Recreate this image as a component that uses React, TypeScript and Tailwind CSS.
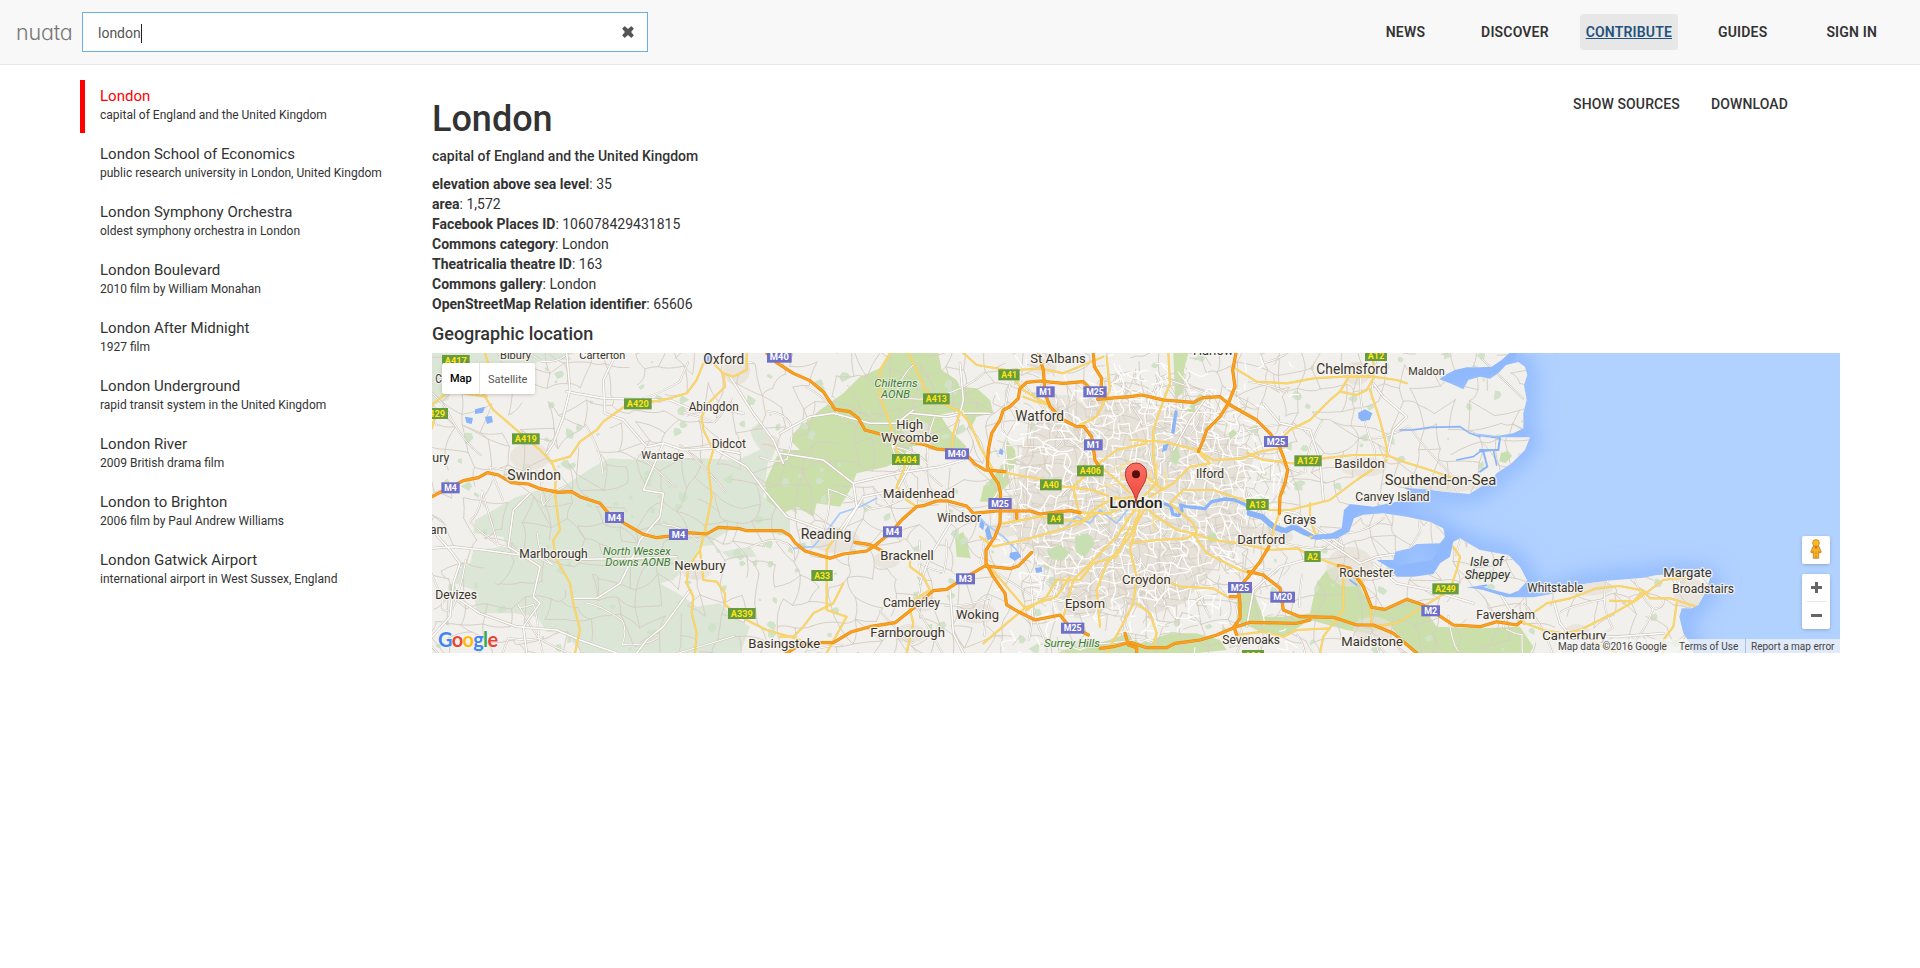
import React from "react";

const NAV = [
  { label: "NEWS", left: "ml-0" },
  { label: "DISCOVER", left: "ml-[44px]" },
  { label: "CONTRIBUTE", left: "ml-[25px]", active: true },
  { label: "GUIDES", left: "ml-[34px]" },
  { label: "SIGN IN", left: "ml-[47px]" },
];

const RESULTS = [
  ["London", "capital of England and the United Kingdom"],
  ["London School of Economics", "public research university in London, United Kingdom"],
  ["London Symphony Orchestra", "oldest symphony orchestra in London"],
  ["London Boulevard", "2010 film by William Monahan"],
  ["London After Midnight", "1927 film"],
  ["London Underground", "rapid transit system in the United Kingdom"],
  ["London River", "2009 British drama film"],
  ["London to Brighton", "2006 film by Paul Andrew Williams"],
  ["London Gatwick Airport", "international airport in West Sussex, England"],
];

const FACTS = [
  ["elevation above sea level", "35"],
  ["area", "1,572"],
  ["Facebook Places ID", "106078429431815"],
  ["Commons category", "London"],
  ["Theatricalia theatre ID", "163"],
  ["Commons gallery", "London"],
  ["OpenStreetMap Relation identifier", "65606"],
];

/* ---------- map geometry, three units to the pixel ---------- */

const LAND =
  "M6 9H3238L3215 30 3185 50 3150 52 3110 52 3075 60 3045 75 3028 88 3060 100 3100 118 3115 90 3150 80 3180 86 3205 70 3228 45 3265 36 3285 50 3292 75 3282 105 3290 150 3280 190 3280 235 3250 250 3200 258 3150 252 3110 246 3150 256 3200 262 3300 262 3285 300 3245 340 3200 370 3180 395 3150 412 3118 432 3040 425 2990 418 2920 413 2945 425 2900 455 2830 470 2760 462 2742 480 2735 535 2705 550 2650 556 2640 568 2720 566 2758 545 2772 505 2800 494 2860 490 2930 500 3000 515 3040 535 3045 560 3030 580 2960 582 2940 595 2895 605 2890 630 2840 630 2880 655 2900 680 2950 680 3010 672 3030 640 3060 620 3070 575 3090 565 3150 600 3235 615 3270 650 3292 692 3265 722 3240 732 3200 722 3150 708 3110 712 3160 720 3230 742 3310 742 3360 733 3440 705 3530 692 3640 683 3680 675 3760 672 3840 685 3830 720 3805 765 3785 775 3755 775 3748 800 3760 850 3780 880 3790 909H6Z";

const GREEN_PALE = [
  "M6 9H410L425 30 330 30 300 55 235 60 220 95 200 80 120 40 70 100 55 150 6 165Z",
  "M430 390L490 350 540 325 640 330 820 325 920 330 990 300 1015 330 1000 440 1060 480 1080 500V560L1010 545 900 540 850 570 860 610 900 600 960 590 980 620 900 625 850 585 810 590 780 640 730 690 690 700 760 740 800 770 870 760 910 800 960 830 930 909H460L400 850 350 845 320 800 250 790 140 790 130 720 75 700 80 660 120 640 130 600 230 590 220 560 130 550 135 510 200 475 260 440 330 420 370 430Z",
  "M960 240L990 215 1010 250 1040 290 1020 340 970 270Z",
];

const GREEN = [
  "M1380 9H1525L1535 60 1580 90 1590 110 1640 115 1680 150 1690 190 1640 200 1620 240 1600 180 1500 200 1450 250 1480 285 1440 290 1420 320 1370 350 1280 370 1260 420 1230 470 1160 460 1150 500 1100 470 1060 490 1010 450 1005 400 1040 320 1060 300 1110 300 1080 270 1090 250 1170 180 1240 130 1290 80 1350 55Z",
  "M1730 270L1755 300 1760 345 1730 370 1740 395 1720 420 1710 455 1650 455 1660 410 1690 380 1730 330Z",
  "M1470 200L1530 195 1560 240 1610 290 1580 310 1510 290 1460 240Z",
  "M2420 740L2460 700 2500 800 2560 800 2640 790 2660 700 2690 660 2740 640 2780 680 2800 730 2830 780 2870 775 2930 745 2980 770 3020 830 3150 835 3270 830 3310 890 3300 909H2960L2880 830 2810 850 2750 840 2640 810 2560 860 2500 850 2460 830 2420 830Z",
  "M1940 889L2000 880 2040 870 2090 850 2130 880 2220 850 2300 850 2370 870 2390 900 2300 909H1880Z",
  "M1940 555L1985 550 2000 590 1960 625 1935 600Z",
  "M1575 560L1600 545 1612 580 1622 625 1580 620Z",
  "M2230 9L2275 9 2262 60 2258 130 2235 145Z",
  "M2270 180L2310 130 2325 140 2290 210Z",
];

const TOWNS: number[][] = [
  [300, 320, 60, 40],
  [920, 60, 40, 45],
  [1460, 240, 45, 28],
  [1215, 570, 75, 38],
  [1370, 630, 40, 25],
  [1480, 760, 45, 24],
  [1500, 440, 50, 22],
  [1840, 50, 40, 25],
  [1900, 180, 60, 45],
  [1640, 790, 60, 30],
  [1950, 760, 70, 45],
  [2780, 70, 40, 35],
  [2800, 350, 70, 30],
  [3060, 400, 110, 25],
  [2760, 650, 70, 60],
  [2830, 840, 60, 40],
  [2500, 560, 90, 30],
  [3470, 715, 80, 22],
  [3780, 730, 50, 45],
  [3440, 850, 40, 28],
  [800, 660, 45, 30],
  [1720, 540, 55, 20],
  [1440, 850, 50, 28],
  [1020, 280, 30, 25],
];

const MOTORWAYS = [
  "M6 440L60 412 100 392 145 383 172 368 205 375 245 398 295 402 330 416 385 427 425 425 450 440 510 460 540 495 600 530 640 553 680 563 720 558 770 548 830 552 865 532 930 536 950 542 1055 542 1080 557 1095 578 1125 603 1200 625 1240 612 1310 603 1330 590 1380 550 1415 510 1460 470 1480 467 1520 453 1550 452 1610 468 1630 490 1700 483 1800 483 1830 492 1880 486 1920 482 1950 488",
  "M1275 577L1320 584 1355 602",
  "M1760 483V505",
  "M1010 9L1040 38 1090 70 1140 92 1180 125 1215 178 1260 185 1285 205 1305 240 1350 252 1400 265 1480 283 1520 297 1600 303 1635 342 1665 360 1725 365",
  "M2548 490L2550 440 2565 400 2573 360 2560 320 2548 290 2520 250 2480 210 2400 165 2370 140 2320 143 2290 157 2200 150 2170 143 2135 135 2100 140 2060 143 2003 148 2012 130 1980 115 1960 95 1900 100 1830 93 1790 97 1770 115 1765 145 1740 170 1720 180 1710 210 1685 250 1675 300 1672 350 1690 380 1705 400 1712 430 1710 520 1695 560 1668 600 1668 640 1690 680 1725 730 1730 765 1765 785 1815 810 1890 795 1910 820 1975 855",
  "M2010 895L2050 890 2100 877 2150 893 2210 893 2235 880 2310 870 2360 855 2415 832 2460 817 2600 820 2640 810",
  "M2517 590L2490 635 2455 680 2425 715 2430 760 2430 805 2412 830 2420 855",
  "M2400 740H2428",
  "M1825 9L1840 60 1845 130 1860 170 1900 210 1940 230 1962 230 1985 260 1995 330 2005 345",
  "M1990 9L1993 50 2015 85 2012 130",
  "M2418 9L2408 60 2415 110 2395 160 2370 200 2330 240 2320 270 2305 305",
  "M1070 909L1110 885 1160 878 1210 878 1265 845 1320 830 1395 818 1450 775 1510 722 1550 718 1610 680 1665 648 1740 656 1765 648 1805 607",
  "M2455 665L2500 675 2550 715 2560 780 2610 800 2710 802 2780 825 2830 825 2890 850 2960 909",
  "M2725 647L2760 655 2800 710 2825 772 2865 778 2930 748 2980 765 3040 805 3070 825 3150 830 3200 815 3260 825 3272 815",
  "M2085 850L2095 885 2120 893 2120 909",
];

const A_ROADS = [
  "M140 100L190 180 260 240 330 300 365 335 378 370 375 430 385 510 390 540 370 570 375 620 420 700 430 760 450 840 435 909",
  "M365 335L420 320 450 275 500 240 520 215 590 165 640 160 720 145 770 130 800 90 820 40 850 40 880 70 910 80 950 60 950 9",
  "M6 165L60 120 100 130 170 140",
  "M20 180L6 235",
  "M880 70L885 110 835 160 815 200 820 240 850 300 835 350 845 440 830 520 810 600 775 650 770 700 790 740 785 790 800 850 795 909",
  "M810 600L820 690 860 695 885 730 885 765 950 810 1010 840 1080 860 1110 870",
  "M165 9L180 60 160 130",
  "M1380 9L1350 60 1350 140 1380 220 1400 300 1425 350 1400 410 1430 450 1460 470",
  "M1435 9L1460 60 1485 120 1540 160 1590 185 1620 220 1650 290 1690 360 1760 375 1830 387 1900 410 1990 420 2040 440 2100 450",
  "M1590 185L1570 250 1565 300",
  "M1600 9L1640 45 1730 60 1780 120 1830 150 1860 165",
  "M1765 60L1830 55 1900 70 2020 20",
  "M1190 909L1250 800 1190 780 1190 680 1190 600 1230 540",
  "M1050 860L1090 860 1120 830 1150 790 1210 760 1240 700",
  "M1430 909L1450 820 1435 760 1500 720 1480 680 1440 650 1440 610",
  "M1650 560L1690 590 1780 570 1870 545 1950 520 1990 480 2040 450 2120 440",
  "M1720 520L1830 500 1900 510 1960 515 2000 490",
  "M1670 640L1790 780 1850 740 1880 690 1950 690 1990 640 2060 620 2100 530",
  "M1660 880L1730 820 1790 770 1880 740 1920 680",
  "M2010 830L2000 720 2030 640 2100 560 2130 480",
  "M2100 580L2180 570 2270 565 2300 545 2290 520 2220 460 2260 420 2350 420 2440 450 2520 480 2580 480 2700 450 2780 390 2870 330",
  "M2150 465L2120 520 2100 600 2120 680 2110 760 2080 820 2030 909",
  "M2290 550L2350 570 2430 580 2520 600 2600 595 2650 620 2720 645",
  "M2290 550L2330 610 2430 660 2460 670",
  "M2100 690L2200 690 2250 710 2350 715 2390 740",
  "M2120 760L2160 790 2180 850 2170 890",
  "M2215 9L2220 100 2190 180 2170 240 2170 320 2180 400 2130 450",
  "M2100 270L2200 275 2300 300 2350 330 2440 325 2490 305 2570 290",
  "M2310 310L2340 340 2280 350 2230 400 2160 440",
  "M2450 310L2500 330 2590 340 2680 325 2770 315 2870 315 2920 335 3000 360 3070 385",
  "M2415 55L2480 95 2570 100 2650 85 2740 80 2820 80",
  "M2550 270L2580 240 2640 210 2700 150 2730 125 2780 135 2810 120 2830 85 2830 9",
  "M2820 120L2850 210 2870 290 2870 320",
  "M2730 125L2760 75 2830 80 2900 90 2930 100",
  "M2640 460L2640 510 2660 560 2640 560",
  "M2548 490L2530 540 2517 590",
  "M2740 680L2740 780 2680 860 2670 909",
  "M2790 680L2820 760 2825 830 2900 820 2980 770 3060 720 3080 660 3090 620 3070 590",
  "M3272 815L3340 840 3400 850 3450 840 3550 790 3620 750 3700 690 3780 680",
  "M3272 815L3350 760 3420 745 3500 715 3570 708 3640 722 3660 745 3720 745 3800 770",
  "M3640 722L3610 755 3540 752",
  "M3740 760L3730 830 3700 870 3700 909",
  "M3450 850L3500 880 3560 909",
  "M2420 855L2500 845 2560 860 2600 840 2700 835",
  "M2100 350L2150 380 2200 420",
  "M1940 230L2000 200 2040 120 2030 20",
  "M2000 345L2060 300 2150 280",
  "M2000 345L1930 410 1940 460 1950 500",
  "M1860 165L1820 155 1780 140",
  "M2005 345L2060 390 2100 430",
  "M2120 450L2180 500 2240 540 2290 550",
  "M2120 470L2060 560 2000 620 1930 690 1900 800",
  "M2120 450L2040 490 1950 488",
];

const WHITE_ROADS = [
  "M6 595L70 590 160 600 230 610 330 620 460 628 620 625 740 620",
  "M560 9L520 90 525 190 580 210 650 290 700 280 760 300 850 295 930 310",
  "M700 280L640 420 700 430 690 500 630 570 600 640 570 700 500 745 430 745",
  "M410 9L420 120 400 200 370 280 350 310",
  "M410 125L520 145 720 150 790 180 840 170 940 190",
  "M6 540L60 600 90 640 70 700 60 800 6 860",
  "M60 730L150 790 260 830 380 840 450 870 560 909",
  "M300 430L250 480 235 590 330 650 310 740 330 760 280 830 290 909",
  "M780 720L700 830 650 870 620 909",
  "M900 80L970 190 1030 270 1060 340",
  "M860 300L950 350 1010 430 1070 500 1180 540",
  "M1050 310L1180 330 1270 400 1280 470 1230 540",
  "M1270 400L1400 370 1530 350 1600 330",
  "M1050 250L1140 200 1210 190 1320 220 1400 220 1450 180",
  "M1440 190L1550 200 1600 190 1680 190",
  "M1590 40L1600 150 1590 190",
  "M1240 540L1300 440 1400 420 1450 330",
  "M1550 450L1560 520 1500 620 1470 700",
  "M1560 720L1570 850 1600 909",
  "M2330 140L2280 210 2230 300",
  "M2500 160L2550 220 2640 240 2670 330 2680 450",
  "M2600 520L2700 580 2790 640 2840 620 2980 600",
  "M2450 830L2470 720 2550 650 2660 620",
  "M2830 640L2900 700 3000 720 3130 760",
  "M3220 830L3240 780 3210 730",
  "M3370 750L3390 820 3440 880",
  "M3480 860L3560 860 3700 850",
  "M2870 320L2890 240 2930 200 2860 140 2830 100",
  "M2550 480L2600 490 2670 540 2740 590",
];

function seeded(seed: number) {
  let s = seed;
  return () => {
    s = (s * 1664525 + 1013904223) % 4294967296;
    return s / 4294967296;
  };
}

/* An irregular lattice of lanes; `keep` gives the chance of an edge at a point. */
function lattice(
  seed: number,
  cell: number,
  box: number[],
  keep: (x: number, y: number) => number,
) {
  const rnd = seeded(seed);
  const [x0, y0, x1, y1] = box;
  const cols = Math.ceil((x1 - x0) / cell) + 1;
  const rows = Math.ceil((y1 - y0) / cell) + 1;
  const pts: number[][][] = [];
  for (let j = 0; j <= rows; j++) {
    const row: number[][] = [];
    for (let i = 0; i <= cols; i++) {
      row.push([
        x0 + (i + (rnd() - 0.5) * 0.85) * cell,
        y0 + (j + (rnd() - 0.5) * 0.85) * cell,
      ]);
    }
    pts.push(row);
  }
  let d = "";
  const edge = (a: number[], b: number[]) => {
    const k = rnd();
    const mx = (a[0] + b[0]) / 2 + (rnd() - 0.5) * cell * 0.5;
    const my = (a[1] + b[1]) / 2 + (rnd() - 0.5) * cell * 0.5;
    if (k < keep(mx, my)) {
      d += `M${a[0].toFixed(0)} ${a[1].toFixed(0)}Q${mx.toFixed(0)} ${my.toFixed(0)} ${b[0].toFixed(0)} ${b[1].toFixed(0)}`;
    }
  };
  for (let j = 0; j < rows; j++) {
    for (let i = 0; i < cols; i++) {
      edge(pts[j][i], pts[j][i + 1]);
      edge(pts[j][i], pts[j + 1][i]);
      if (rnd() < 0.2) edge(pts[j][i], pts[j + 1][i + 1]);
    }
  }
  return d;
}

const londonDistance = (x: number, y: number) =>
  Math.hypot((x - 2120) / 400, (y - 440) / 370);

const LANES = lattice(7, 58, [0, 0, 4000, 920], () => 0.62);
const SUBURB = lattice(21, 30, [1700, 20, 2560, 880], (x, y) =>
  londonDistance(x, y) < 1 ? 0.7 : 0.1,
);
const CITY = lattice(5, 25, [1700, 20, 2560, 880], (x, y) => {
  const r = londonDistance(x, y);
  return r < 0.85 ? 0.62 : r < 1.1 ? 0.3 : 0.05;
});
const CORE = lattice(11, 34, [1980, 340, 2280, 560], (x, y) =>
  londonDistance(x, y) < 0.3 ? 0.45 : 0,
);
const FIELDWAYS = lattice(33, 110, [0, 0, 3900, 920], (x, y) =>
  londonDistance(x, y) < 1.2 ? 0.4 : 0.22,
);

const PARKS = (() => {
  const rnd = seeded(99);
  return Array.from({ length: 300 }, () => {
    const x = rnd() * 3800;
    const y = rnd() * 900;
    const r = 4 + rnd() * 13;
    let d = "";
    for (let k = 0; k < 6; k++) {
      const q = r * (0.5 + rnd() * 0.8);
      d += `${k ? "L" : "M"}${(x + q * Math.cos(k * 1.05)).toFixed(0)} ${(y + q * Math.sin(k * 1.05)).toFixed(0)}`;
    }
    return d + "Z";
  }).join("");
})();

type Place = [string, number, number, number, number];
/* text, left, right, baseline, size */
const PLACES: Place[] = [
  ["Bibury", 210, 303, 26, 33],
  ["Carterton", 448, 586, 26, 33],
  ["Oxford", 820, 943, 41, 42],
  ["Abingdon", 776, 926, 184, 36],
  ["Didcot", 845, 948, 295, 36],
  ["Wantage", 634, 762, 327, 33],
  ["Swindon", 232, 393, 390, 42],
  ["Marlborough", 268, 473, 625, 36],
  ["Newbury", 733, 887, 659, 39],
  ["Devizes", 16, 141, 748, 36],
  ["Basingstoke", 955, 1171, 893, 39],
  ["C", 16, 36, 99, 36],
  ["bury", -14, 58, 335, 36],
  ["ham", -20, 51, 553, 36],
  ["St Albans", 1801, 1967, 40, 39],
  ["Watford", 1756, 1902, 213, 42],
  ["High", 1399, 1479, 238, 39],
  ["Wycombe", 1353, 1525, 277, 39],
  ["Maidenhead", 1359, 1575, 445, 39],
  ["Windsor", 1521, 1653, 516, 36],
  ["Reading", 1112, 1264, 567, 42],
  ["Bracknell", 1351, 1511, 631, 39],
  ["Camberley", 1359, 1530, 772, 36],
  ["Woking", 1578, 1707, 806, 39],
  ["Farnborough", 1321, 1545, 861, 39],
  ["Epsom", 1905, 2025, 774, 39],
  ["Croydon", 2076, 2222, 703, 39],
  ["Harlow", 2289, 2410, 14, 39],
  ["Chelmsford", 2659, 2873, 72, 42],
  ["Maldon", 2935, 3044, 75, 33],
  ["Ilford", 2298, 2382, 385, 36],
  ["Basildon", 2713, 2864, 354, 39],
  ["Southend-on-Sea", 2864, 3199, 405, 42],
  ["Canvey Island", 2776, 2999, 454, 36],
  ["Grays", 2560, 2659, 523, 39],
  ["Dartford", 2422, 2566, 581, 39],
  ["Rochester", 2728, 2889, 682, 36],
  ["Sevenoaks", 2377, 2550, 883, 36],
  ["Maidstone", 2734, 2919, 887, 39],
  ["Faversham", 3139, 3315, 808, 36],
  ["Whitstable", 3292, 3460, 727, 36],
  ["Margate", 3700, 3845, 680, 39],
  ["Broadstairs", 3727, 3912, 729, 36],
  ["Canterbury", 3337, 3529, 869, 39],
];

const AREAS: (Place | [string, number, number, number, number, string])[] = [
  ["North Wessex", 519, 722, 615, 34],
  ["Downs AONB", 526, 722, 648, 34],
  ["Chilterns", 1333, 1463, 111, 34],
  ["AONB", 1353, 1440, 144, 34],
  ["Surrey Hills", 1842, 2010, 892, 34],
  ["Isle of", 3120, 3220, 648, 36, "#333"],
  ["Sheppey", 3104, 3240, 686, 36, "#333"],
];

/* text, left, top, width */
const MOTORWAY_SIGNS: [string, number, number, number][] = [
  ["M40", 1011, 5, 74],
  ["M4", 34, 397, 55],
  ["M4", 525, 486, 57],
  ["M4", 717, 537, 57],
  ["M40", 1545, 295, 72],
  ["M4", 1359, 529, 57],
  ["M25", 1675, 444, 70],
  ["M1", 1819, 109, 55],
  ["M25", 1960, 109, 70],
  ["M1", 1962, 268, 56],
  ["M3", 1578, 670, 57],
  ["M25", 1893, 818, 70],
  ["M25", 2502, 258, 72],
  ["M25", 2394, 696, 72],
  ["M20", 2521, 725, 74],
  ["M2", 2974, 766, 56],
];

const ROAD_SIGNS: [string, number, number, number][] = [
  ["A417", 36, 15, 83],
  ["A429", -30, 174, 84],
  ["A420", 582, 145, 83],
  ["A419", 246, 250, 83],
  ["A339", 894, 774, 83],
  ["A41", 1705, 58, 64],
  ["A413", 1479, 130, 80],
  ["A404", 1386, 312, 83],
  ["A406", 1941, 346, 80],
  ["A40", 1830, 388, 65],
  ["A4", 1852, 490, 49],
  ["A33", 1144, 660, 64],
  ["A12", 2805, 0, 66],
  ["A127", 2593, 316, 82],
  ["A13", 2449, 447, 67],
  ["A2", 2623, 603, 49],
  ["A249", 3007, 700, 79],
  ["A21", 2436, 900, 66],
];

function RoadMap() {
  return (
    <svg
      className="block h-full w-full"
      viewBox="6 9 4224 900"
      preserveAspectRatio="none"
      fontFamily="Roboto, sans-serif"
      fill="none"
      strokeLinejoin="round"
      strokeLinecap="round"
    >
      <defs>
        <clipPath id="land">
          <path d={LAND} />
        </clipPath>
        <filter id="shore" x="-10%" y="-20%" width="120%" height="140%">
          <feGaussianBlur stdDeviation="30" />
        </filter>
        <filter id="soft">
          <feGaussianBlur stdDeviation="5" />
        </filter>
        <linearGradient id="pin" x1="0" y1="0" x2="0" y2="1">
          <stop offset="0" stopColor="#fb7064" />
          <stop offset="1" stopColor="#f0463c" />
        </linearGradient>
      </defs>

      <rect x="6" y="9" width="4224" height="900" fill="#b1d1ff" />
      <path d={LAND} stroke="#8fb8fd" strokeWidth="56" filter="url(#shore)" />
      <path
        d="M3238 9L3185 50 3110 52 3028 88M2920 430L2760 470 2740 540 2650 560M2850 640L2900 670 3020 650 3060 590M3110 712L3160 716 3240 737"
        stroke="#8fb8fd"
        strokeWidth="44"
      />
      <path d={LAND} fill="#f2f0ec" />

      <g clipPath="url(#land)">
        <g fill="#dce6d6">
          {GREEN_PALE.map((d) => (
            <path key={d} d={d} />
          ))}
        </g>
        <g fill="#cadfaa">
          {GREEN.map((d) => (
            <path key={d} d={d} />
          ))}
        </g>
        <path d={PARKS} fill="#d0e3c9" />
        <g fill="#e6e0d7">
          {TOWNS.map(([x, y, rx, ry]) => (
            <ellipse key={`${x}-${y}`} cx={x} cy={y} rx={rx} ry={ry} opacity="0.75" />
          ))}
          <path
            d="M1990 130L2100 170 2220 180 2320 200 2400 260 2470 330 2440 400 2400 440 2490 560 2400 600 2330 680 2260 760 2180 790 2080 760 1980 790 1900 730 1850 640 1760 560 1730 500 1760 400 1780 280 1830 210 1910 190Z"
            opacity="0.9"
          />
        </g>

        <path d={LANES} stroke="#d6cfc5" strokeWidth="3" />
        <path d={FIELDWAYS} stroke="#cfc7bc" strokeWidth="6" />
        <path d={FIELDWAYS} stroke="#fff" strokeWidth="3" />
        <path d={SUBURB} stroke="#d8d1c6" strokeWidth="3" />
        <path d={CITY} stroke="#fff" strokeWidth="3.5" />
        <path d={CORE} stroke="#f8de8c" strokeWidth="4.5" />
        <g fill="#c8dfb4">
          <path d="M2225 300l18-8 8 30-14 22-16-10zM1935 560l40-10 20 30-30 40-28-14zM2040 470l28-6 2 16-28 4zM1850 600l40-16 30 22-24 28-36-10zM2330 555l24-8 10 20-22 14zM2395 250l16-12 10 12-20 20zM3212 310l22-8 12 16-20 22-18-6z" />
        </g>

        <g fill="#8ab4f8">
          <path d="M2785 188l20-10 22 12-8 20-24 4-10-10zM1740 608l24-4 10 16-20 12-16-10zM1675 525l12 40-14 6-8-30zM1650 505l14 10-4 26-12-10zM1710 295l10 6-2 14-12-4zM820 15l24-6 6 20-22 14zM165 200l20-2 4 18-18 6zM105 200l24 4-4 18-16-4zM135 178l30-8-6 18-24 4zM2235 180l8 4-10 70-10-6 8-50zM2200 285l16-4-6 20-14 6zM1815 655l20-4 2 14-18 4z" />
        </g>
        <g stroke="#8ab4f8" strokeWidth="5">
          <path d="M2910 240L2950 240 3000 232 3090 230 3120 250 3150 260" />
          <path d="M3080 330L3130 320 3150 305 3190 300 3200 345" />
          <path d="M2780 705L2760 690M3130 712L3170 706" />
        </g>
        <path d="M3150 256L3210 264 3205 300 3150 300M3160 305L3172 350 3150 365" stroke="#8ab4f8" strokeWidth="6" />
        <path
          d="M1090 595L1150 590 1200 530 1230 490 1290 470 1340 445M1640 490L1665 520 1720 560 1760 600M1900 540L1940 500 1980 520 2010 480 2060 520 2100 470"
          stroke="#a6c8fb"
          strokeWidth="5"
        />
        <path
          d="M2205 462L2222 468 2228 492 2245 497 2256 482 2252 465 2270 470 2325 476 2345 455 2385 447 2415 450 2450 466 2458 490 2495 498 2530 528 2565 545 2590 533 2620 545"
          stroke="#8ab4f8"
          strokeWidth="10"
        />
        <path
          d="M2458 490L2495 500 2530 530 2565 543 2590 530 2625 548 2660 561 2720 558"
          stroke="#8ab4f8"
          strokeWidth="17"
        />

        {WHITE_ROADS.map((d) => (
          <path key={d} d={d} stroke="#cbc3b8" strokeWidth="8" />
        ))}
        {WHITE_ROADS.map((d) => (
          <path key={`${d}w`} d={d} stroke="#fff" strokeWidth="4.5" />
        ))}
        {A_ROADS.map((d) => (
          <path key={d} d={d} stroke="#efcb70" strokeWidth="6.5" />
        ))}
        {A_ROADS.map((d) => (
          <path key={`${d}y`} d={d} stroke="#fbd76a" strokeWidth="4.5" />
        ))}
        {MOTORWAYS.map((d) => (
          <path key={d} d={d} stroke="#e58a0c" strokeWidth="9.5" />
        ))}
        {MOTORWAYS.map((d) => (
          <path key={`${d}m`} d={d} stroke="#fa9f1e" strokeWidth="6.5" />
        ))}
      </g>

      <g fontSize="27" fontWeight="700" textAnchor="middle">
        {MOTORWAY_SIGNS.map(([t, x, y, w]) => (
          <g key={`${t}${x}`}>
            <rect x={x} y={y} width={w} height="33" fill="#6f6fc8" />
            <text x={x + w / 2} y={y + 26} fill="#fff" textLength={w - 17} lengthAdjust="spacingAndGlyphs">
              {t}
            </text>
          </g>
        ))}
        {ROAD_SIGNS.map(([t, x, y, w]) => (
          <g key={`${t}${x}`}>
            <rect x={x} y={y} width={w} height="33" fill="#679b3d" />
            <text x={x + w / 2} y={y + 26} fill="#ffe619" textLength={w - 17} lengthAdjust="spacingAndGlyphs">
              {t}
            </text>
          </g>
        ))}
      </g>

      <g fill="#3a342c" stroke="#f7f5f1" strokeOpacity="0.85" strokeWidth="8" paintOrder="stroke">
        {PLACES.map(([t, l, r, y, size]) => (
          <text key={t} x={l} y={y} fontSize={size} textLength={r - l} lengthAdjust="spacingAndGlyphs">
            {t}
          </text>
        ))}
        <text
          x="2038"
          y="474"
          fontSize="46"
          fontWeight="500"
          fill="#222"
          textLength="160"
          lengthAdjust="spacingAndGlyphs"
        >
          London
        </text>
      </g>
      <g fontStyle="italic" stroke="#eef2e6" strokeOpacity="0.7" strokeWidth="6" paintOrder="stroke">
        {AREAS.map(([t, l, r, y, size, fill]) => (
          <text key={t} x={l} y={y} fontSize={size} fill={fill ?? "#3d7a38"} textLength={Number(r) - Number(l)} lengthAdjust="spacingAndGlyphs">
            {t}
          </text>
        ))}
      </g>

      <path
        d="M2118 458C2115 420 2086 404 2086 371A32 32 0 0 1 2150 371C2150 404 2121 420 2118 458Z"
        fill="url(#pin)"
        stroke="#b7362e"
        strokeWidth="3"
      />
      <circle cx="2118" cy="373" r="12" fill="#5a0e0a" />
    </svg>
  );
}

function GoogleWordmark() {
  return (
    <div
      className="font-['Lato',sans-serif] text-[20px] leading-[24px] font-bold tracking-[-0.7px] [text-shadow:0_0_2px_rgba(255,255,255,0.9)]"
      aria-label="Google"
    >
      <span className="text-[#4285f4]">G</span>
      <span className="text-[#ea4335]">o</span>
      <span className="text-[#fbbc05]">o</span>
      <span className="text-[#4285f4]">g</span>
      <span className="text-[#34a853]">l</span>
      <span className="text-[#ea4335]">e</span>
    </div>
  );
}

function Pegman() {
  return (
    <svg className="h-[20px] w-[12px]" viewBox="0 0 12 20">
      <path
        d="M3 7.500h6l2.300 5.600-1.800.9-.8-1.600v6.800H3.300V12.400L2.500 14 .7 13.100Z"
        fill="#f9b21e"
        stroke="#b5792a"
        strokeWidth="0.8"
      />
      <path d="M4 7.300h4L6 10.500Z" fill="#ee6c1c" />
      <path d="M6 12.500V19" stroke="#c98a1c" strokeWidth="0.7" />
      <circle cx="6" cy="4" r="3.400" fill="#fbb922" stroke="#b5792a" strokeWidth="0.7" />
    </svg>
  );
}

function MapPanel() {
  return (
    <div className="relative h-[300px] w-[1408px] overflow-hidden bg-[#b1d1ff]">
      <RoadMap />

      <div className="absolute top-[10px] left-[10px] flex h-[31px] rounded-[2px] bg-white text-[11px] leading-[31px] shadow-[0_1px_4px_-1px_rgba(0,0,0,0.3)]">
        <div className="w-[38px] border-r border-[#e5e5e5] pl-[8px] font-medium text-black">Map</div>
        <div className="w-[55px] pt-px pl-[8px] text-[#565656]">Satellite</div>
      </div>

      <div className="absolute bottom-[2px] left-[6px]">
        <GoogleWordmark />
      </div>

      <div className="absolute top-[183px] right-[10px] flex h-[28px] w-[28px] items-center justify-center rounded-[2px] bg-white pb-[2px] shadow-[0_1px_4px_-1px_rgba(0,0,0,0.3)]">
        <Pegman />
      </div>

      <div className="absolute top-[221px] right-[10px] flex h-[55px] w-[28px] flex-col items-center rounded-[2px] bg-white shadow-[0_1px_4px_-1px_rgba(0,0,0,0.3)]">
        <div className="flex h-[27px] items-center">
          <svg className="h-[11px] w-[11px]" viewBox="0 0 11 11">
            <path d="M4 0h3v4h4v3H7v4H4V7H0V4h4z" fill="#666" />
          </svg>
        </div>
        <div className="h-px w-[19px] bg-[#e6e6e6]" />
        <div className="flex h-[27px] items-center">
          <div className="h-[3px] w-[11px] bg-[#666]" />
        </div>
      </div>

      <div className="absolute right-0 bottom-0 flex h-[14px] bg-[#f5f5f5]/70 text-[10px] leading-[15px] text-[#444]">
        <div className="w-[117px] pl-[1px]">Map data ©2016 Google</div>
        <div className="w-[72px] border-r border-[#a9c3e8] pl-[5px]">Terms of Use</div>
        <div className="w-[94px] pl-[5px]">Report a map error</div>
      </div>
    </div>
  );
}

export default function App() {
  return (
    <div className="min-h-[968px] bg-white font-['Roboto',sans-serif] text-[14px] leading-[20px] text-[#333]">
      <header className="flex h-[65px] items-start justify-between border-b border-[#e7e7e7] bg-[#f8f8f8]">
        <div className="flex pt-[12px]">
          <div className="w-[82px] pl-[16px] font-['Inter',sans-serif] text-[21.5px] leading-[40px] font-light tracking-[-0.2px] text-[#777] [font-feature-settings:'cv11']">
            nuata
          </div>
          <div className="flex h-[40px] w-[566px] items-center justify-between border border-[#66afe9] bg-white pr-[12px] pl-[15px] text-[#555]">
            <div className="flex items-center pt-[2px]">
              <span>london</span>
              <span className="h-[19px] w-px bg-[#222]" />
            </div>
            <svg className="h-[14px] w-[14px]" viewBox="0 0 1792 1792" fill="#555">
              <path d="M1618 1322q0 40-28 68l-200 200q-28 28-68 28t-68-28l-358-300-358 300q-28 28-68 28t-68-28l-200-200q-28-28-28-68t28-68l300-358-300-358q-28-28-28-68t28-68l200-200q28-28 68-28t68 28l358 300 358-300q28-28 68-28t68 28l200 200q28 28 28 68t-28 68l-300 358 300 358q28 28 28 68z" />
            </svg>
          </div>
        </div>
        <nav className="flex pt-[14px] pr-[37px] font-semibold tracking-[0.17px]">
          {NAV.map((item) => (
            <a
              key={item.label}
              className={
                item.active
                  ? `${item.left} h-[36px] rounded-[3px] bg-[#e7e7e7] px-[6px] leading-[36px] text-[#23527c] underline`
                  : `${item.left} h-[36px] px-[6px] leading-[36px]`
              }
            >
              {item.label}
            </a>
          ))}
        </nav>
      </header>

      <main className="flex">
        <aside className="w-[352px] shrink-0 pt-[15px] pl-[80px]">
          {RESULTS.map(([title, text], i) => (
            <div
              key={title}
              className={
                i === 0
                  ? "mb-[5px] h-[53px] border-l-[5px] border-[#f00] pt-[6px] pl-[15px] whitespace-nowrap"
                  : "mb-[5px] h-[53px] border-l-[5px] border-transparent pt-[6px] pl-[15px] whitespace-nowrap"
              }
            >
              <div className={i === 0 ? "text-[15px] leading-[21px] text-[#f00]" : "text-[15px] leading-[21px]"}>
                {title}
              </div>
              <div className="text-[12px] leading-[17px]">{text}</div>
            </div>
          ))}
        </aside>

        <section className="w-[1488px] pl-[80px]">
          <div className="flex w-[1408px] justify-between">
            <h1 className="pt-[34px] text-[36px] leading-[40px] font-medium">London</h1>
            <div className="flex gap-[31px] pt-[29px] pr-[52px] font-medium tracking-[0.12px]">
              <a>SHOW SOURCES</a>
              <a>DOWNLOAD</a>
            </div>
          </div>
          <p className="mt-[7px] font-medium">capital of England and the United Kingdom</p>
          <div className="mt-[8px]">
            {FACTS.map(([name, value]) => (
              <div key={name}>
                <span className="font-bold">{name}</span>: {value}
              </div>
            ))}
          </div>
          <h2 className="mt-[10px] mb-[9px] text-[18px] leading-[20px] font-medium">Geographic location</h2>
          <MapPanel />
        </section>
      </main>
    </div>
  );
}
